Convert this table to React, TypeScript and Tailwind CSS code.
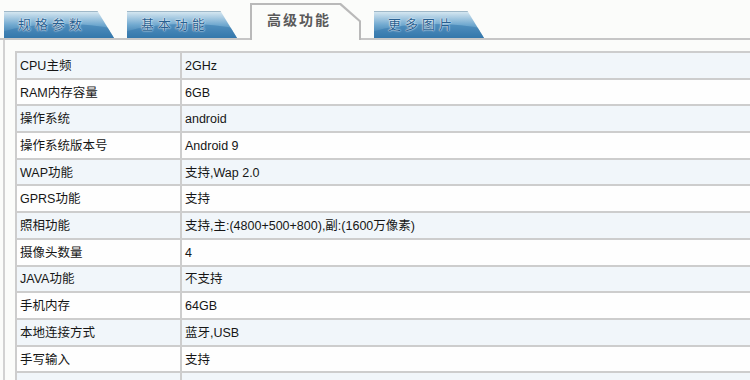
const tabs = [
  { label: "规格参数", active: false },
  { label: "基本功能", active: false },
  { label: "高级功能", active: true },
  { label: "更多图片", active: false },
];

const specs: [string, string][] = [
  ["CPU主频", "2GHz"],
  ["RAM内存容量", "6GB"],
  ["操作系统", "android"],
  ["操作系统版本号", "Android 9"],
  ["WAP功能", "支持,Wap 2.0"],
  ["GPRS功能", "支持"],
  ["照相功能", "支持,主:(4800+500+800),副:(1600万像素)"],
  ["摄像头数量", "4"],
  ["JAVA功能", "不支持"],
  ["手机内存", "64GB"],
  ["本地连接方式", "蓝牙,USB"],
  ["手写输入", "支持"],
  ["", ""],
];

function Tab({ label, active }: { label: string; active: boolean }) {
  if (active) {
    // grey outline made of an outer clipped shape with a lighter one inside
    return (
      <div className="relative -mb-[2px] h-[37px] w-[111px] bg-[#b9b9b9] px-[2px] pt-[2px] [clip-path:polygon(0_0,82%_0,100%_48%,100%_100%,0_100%)]">
        <div className="flex h-full w-full items-center pl-[15px] pb-[4px] bg-[#fbfcfa] [clip-path:polygon(0_0,82%_0,100%_48%,100%_100%,0_100%)]">
          <span className="text-[14px] font-bold tracking-[2px] text-[#5a5a5a]">
            {label}
          </span>
        </div>
      </div>
    );
  }
  return (
    <div className="relative flex h-[27px] w-[110px] items-center overflow-hidden border-t border-[#9fb8c8] bg-linear-to-b from-[#d4e6f0] via-[#6fa8cf] to-[#2a6fa3] pl-[14px] [clip-path:polygon(0_0,85%_0,100%_100%,0_100%)]">
      <div className="absolute -left-[10px] top-[12px] h-[30px] w-[140px] rounded-[50%] bg-[#3a7db0] opacity-60" />
      <span className="relative text-[13px] tracking-[4px] text-[#285f90] [text-shadow:0_0_2px_#fff,0_0_1px_#fff]">
        {label}
      </span>
    </div>
  );
}

export default function App() {
  return (
    <div className="h-[380px] w-[750px] overflow-hidden bg-[#fbfcfa] font-['Liberation_Sans','Noto_Sans_CJK_SC',sans-serif] text-[#161616]">
      {/* tab strip */}
      <div className="flex h-[40px] items-end gap-[13px] border-b-2 border-[#c6c6c6] pl-[4px]">
        {tabs.map((t) => (
          <Tab key={t.label} label={t.label} active={t.active} />
        ))}
      </div>

      {/* spec table */}
      <div className="ml-[3px] h-full border-l-2 border-[#d2d2d2] pl-[10px] pt-[11px]">
        <div className="w-[760px] border-l-2 border-t-2 border-[#cdcdcd]">
          {specs.map(([name, value], i) => (
            <div
              key={i}
              className={
                i % 2 === 0
                  ? "flex h-[26.7px] border-b-2 border-[#cdcdcd] bg-[#f1f6fa]"
                  : "flex h-[26.7px] border-b-2 border-[#cdcdcd] bg-[#fefefe]"
              }
            >
              <div className="flex w-[165px] shrink-0 items-center border-r-2 border-[#cdcdcd] pl-[3px] pt-[2px] text-[12.5px]">
                {name}
              </div>
              <div className="flex items-center pl-[3px] pt-[2px] text-[12.5px]">
                {value}
              </div>
            </div>
          ))}
        </div>
      </div>
    </div>
  );
}
